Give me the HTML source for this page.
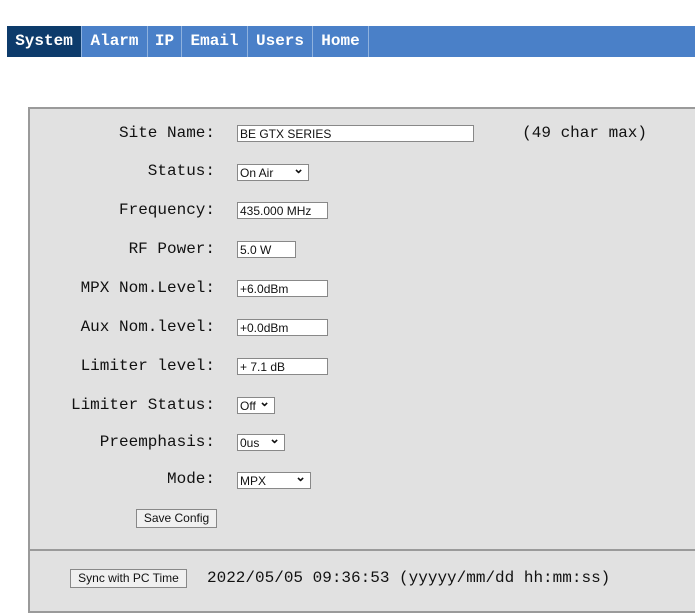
<!DOCTYPE html>
<html><head><style>
body{margin:0;width:695px;height:616px;background:#fff;position:relative;overflow:hidden;font-family:"Liberation Mono",monospace}
.nav{position:absolute;left:7px;top:26px;width:688px;height:31px;background:#4a80c8}
.nav span{position:absolute;top:0;height:31px;line-height:31px;color:#fff;font-weight:bold;font-size:16px;text-align:center;border-right:1px solid #8fb2de}
.p{position:absolute;background:#e1e1e1;border:2px solid #9a9a9a;border-right:none}
.l{position:absolute;right:480px;font-size:16px;color:#111;line-height:20px}
.i{position:absolute;left:237px;height:17px;border:1px solid #888;background:#fff;font:12px "Liberation Sans",sans-serif;line-height:17px;padding-left:2px;box-sizing:border-box;color:#111}
.s::after{content:"⌄";position:absolute;right:4px;top:-5px;font-size:13px;font-weight:bold}
.b{position:absolute;height:19px;border:1px solid #888;background:#f0f0f0;font:12px "Liberation Sans",sans-serif;line-height:17px;text-align:center;box-sizing:border-box;color:#111}
</style></head><body>
<div class="nav">
<span style="left:0;width:74px;background:#0d3b6b">System</span>
<span style="left:75px;width:65px">Alarm</span>
<span style="left:141px;width:33px">IP</span>
<span style="left:175px;width:65px">Email</span>
<span style="left:241px;width:64px">Users</span>
<span style="left:306px;width:55px">Home</span>
</div>
<div class="p" style="left:28px;top:107px;width:670px;height:440px"></div>
<div class="p" style="left:28px;top:549px;width:670px;height:60px"></div>
<div class="l" style="top:123px">Site Name:</div>
<div class="i" style="top:125px;width:237px">BE GTX SERIES</div>
<div class="l" style="top:123px;right:48px">(49 char max)</div>
<div class="l" style="top:161px">Status:</div>
<div class="i s" style="top:164px;width:72px">On Air</div>
<div class="l" style="top:200px">Frequency:</div>
<div class="i" style="top:202px;width:91px">435.000 MHz</div>
<div class="l" style="top:239px">RF Power:</div>
<div class="i" style="top:241px;width:59px">5.0 W</div>
<div class="l" style="top:278px">MPX Nom.Level:</div>
<div class="i" style="top:280px;width:91px">+6.0dBm</div>
<div class="l" style="top:317px">Aux Nom.level:</div>
<div class="i" style="top:319px;width:91px">+0.0dBm</div>
<div class="l" style="top:356px">Limiter level:</div>
<div class="i" style="top:358px;width:91px">+ 7.1 dB</div>
<div class="l" style="top:395px">Limiter Status:</div>
<div class="i s" style="top:397px;width:38px">Off</div>
<div class="l" style="top:432px">Preemphasis:</div>
<div class="i s" style="top:434px;width:48px">0us</div>
<div class="l" style="top:469px">Mode:</div>
<div class="i s" style="top:472px;width:74px">MPX</div>
<div class="b" style="left:136px;top:509px;width:81px">Save Config</div>
<div class="b" style="left:70px;top:569px;width:117px">Sync with PC Time</div>
<div class="l" style="top:568px;left:207px;right:auto">2022/05/05 09:36:53 (yyyyy/mm/dd hh:mm:ss)</div>
</body></html>
